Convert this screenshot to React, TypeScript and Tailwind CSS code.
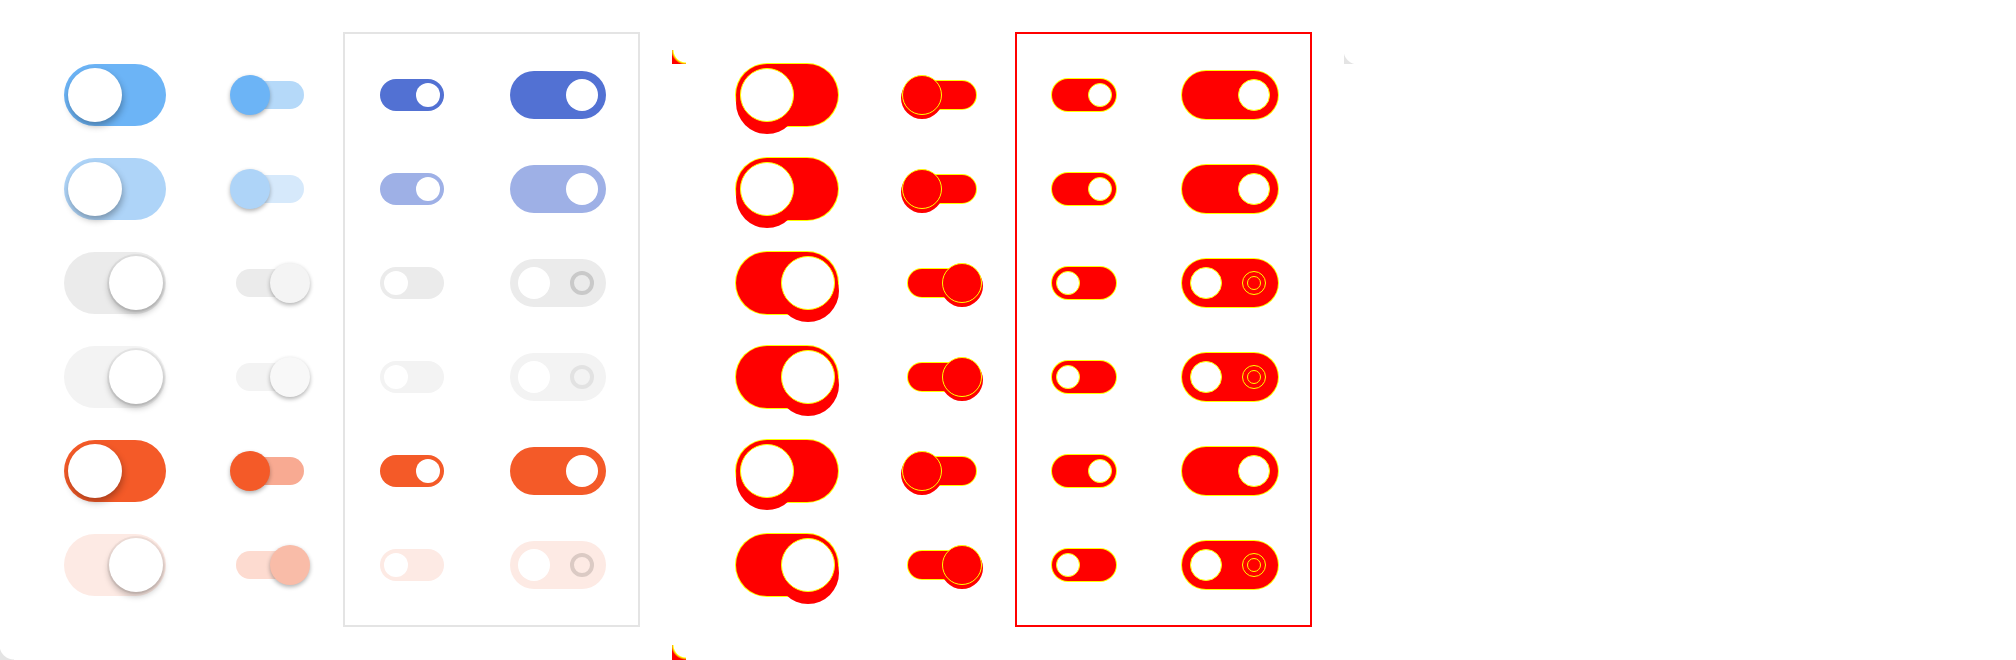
import React from 'react'

type Row = {
    on: boolean
    track: string
    smallTrack: string
    smallThumb: string
    pill: string
    ring: string
}

// one entry per row, same order in every column
const rows: Row[] = [
    { on: true, track: 'bg-[#6cb4f6]', smallTrack: 'bg-[#b5d9f9]', smallThumb: 'bg-[#6cb4f6]', pill: 'bg-[#5271d3]', ring: '' },
    { on: true, track: 'bg-[#aed4f8]', smallTrack: 'bg-[#d6e9fb]', smallThumb: 'bg-[#aed4f8]', pill: 'bg-[#9eb0e6]', ring: '' },
    { on: false, track: 'bg-[#ebebeb]', smallTrack: 'bg-[#ebebeb]', smallThumb: 'bg-[#f4f4f4]', pill: 'bg-[#ebebeb]', ring: 'border-[#c9c9c9]' },
    { on: false, track: 'bg-[#f3f3f3]', smallTrack: 'bg-[#f3f3f3]', smallThumb: 'bg-[#f8f8f8]', pill: 'bg-[#f3f3f3]', ring: 'border-[#e2e2e2]' },
    { on: true, track: 'bg-[#f45a28]', smallTrack: 'bg-[#f8aa92]', smallThumb: 'bg-[#f45a28]', pill: 'bg-[#f45a28]', ring: '' },
    { on: false, track: 'bg-[#fdeae4]', smallTrack: 'bg-[#fddbd0]', smallThumb: 'bg-[#f9bca8]', pill: 'bg-[#fdeae4]', ring: 'border-[#dbcac4]' },
]

const RED = 'bg-[#ff0000] shadow-[0_0_0_1px_#ffff00]'

function InsetSwitch({ row, diff }: { row: Row; diff: boolean }) {
    return (
        <div className={`flex w-[102px] h-[62px] items-center rounded-full p-[4px] ${row.on ? 'justify-start' : 'justify-end pr-[3px]'} ${diff ? RED : row.track}`}>
            <div
                className={`size-[54px] shrink-0 rounded-full bg-white ${
                    diff
                        ? 'border border-[#ffff00] shadow-[0_8px_0_4px_#ff0000]'
                        : row.on
                          ? 'shadow-[1px_4px_7px_rgba(0,0,0,0.3)]'
                          : 'shadow-[0_0_0_2px_rgba(0,0,0,0.05),0_4px_6px_rgba(0,0,0,0.25)]'
                }`}
            />
        </div>
    )
}

function MaterialSwitch({ row, diff }: { row: Row; diff: boolean }) {
    return (
        <div className={`relative w-[68px] h-[28px] rounded-full ${diff ? RED : row.smallTrack}`}>
            {/* knob hangs over the track ends */}
            <div
                className={`absolute top-[-6px] size-[40px] rounded-full ${row.on ? 'left-[-6px]' : 'right-[-6px]'} ${
                    diff
                        ? 'bg-[#ff0000] border border-[#ffff00] shadow-[0_3px_0_1px_#ff0000]'
                        : `${row.smallThumb} shadow-[0_2px_4px_rgba(0,0,0,0.3)]`
                }`}
            />
        </div>
    )
}

function PillSwitch({ row, diff }: { row: Row; diff: boolean }) {
    return (
        <div className={`flex w-[64px] h-[32px] items-center rounded-full p-[4px] ${row.on ? 'justify-end' : 'justify-start'} ${diff ? RED : row.pill}`}>
            <div className={`size-[24px] rounded-full bg-white ${diff ? 'border border-[#ffff00]' : ''}`} />
        </div>
    )
}

function LabelSwitch({ row, diff }: { row: Row; diff: boolean }) {
    return (
        <div className={`flex w-[96px] h-[48px] items-center justify-between rounded-full p-[8px] ${diff ? RED : row.pill}`}>
            {row.on ? (
                <>
                    <span />
                    <div className={`size-[32px] rounded-full bg-white ${diff ? 'border border-[#ffff00]' : ''}`} />
                </>
            ) : (
                <>
                    <div className={`size-[32px] rounded-full bg-white ${diff ? 'border border-[#ffff00]' : ''}`} />
                    {diff ? (
                        <div className="mr-[4px] flex size-[24px] items-center justify-center rounded-full border border-[#ffff00]">
                            <div className="size-[14px] rounded-full border border-[#ffff00]" />
                        </div>
                    ) : (
                        <div className={`mr-[4px] size-[24px] rounded-full border-[4px] ${row.ring}`} />
                    )}
                </>
            )}
        </div>
    )
}

function Panel({ diff }: { diff: boolean }) {
    return (
        <div className="flex items-start pt-[32px]">
            <div className="ml-[64px] mt-[16px] flex flex-col">
                {rows.map((r, i) => (
                    <div key={i} className="flex h-[94px] items-center">
                        <InsetSwitch row={r} diff={diff} />
                    </div>
                ))}
            </div>

            <div className="ml-[64px] mt-[16px] flex w-[80px] flex-col">
                {rows.map((r, i) => (
                    <div key={i} className="flex h-[94px] items-center justify-center">
                        <MaterialSwitch row={r} diff={diff} />
                    </div>
                ))}
            </div>

            {/* bordered group */}
            <div className={`ml-[33px] flex w-[297px] h-[595px] border-2 pt-[14px] ${diff ? 'border-[#ff0000]' : 'border-[#e4e4e4]'}`}>
                <div className="ml-[35px] flex w-[64px] flex-col">
                    {rows.map((r, i) => (
                        <div key={i} className="flex h-[94px] items-center">
                            <PillSwitch row={r} diff={diff} />
                        </div>
                    ))}
                </div>
                <div className="ml-[66px] flex w-[96px] flex-col">
                    {rows.map((r, i) => (
                        <div key={i} className="flex h-[94px] items-center">
                            <LabelSwitch row={r} diff={diff} />
                        </div>
                    ))}
                </div>
            </div>
        </div>
    )
}

export default function App() {
    return (
        <div className="flex w-[2016px] h-[660px] overflow-hidden bg-white">
            {/* expected */}
            <div className="relative w-[672px] h-[660px] shrink-0">
                <Panel diff={false} />
                <div className="absolute bottom-0 left-0 w-[14px] h-[15px] bg-[radial-gradient(circle_at_100%_0%,#ffffff_14px,#e4e4e4_15px)]" />
            </div>

            {/* diff */}
            <div className="relative w-[672px] h-[660px] shrink-0">
                <Panel diff={true} />
                <div className="absolute top-[50px] left-0 w-[14px] h-[14px] bg-[radial-gradient(circle_at_100%_0%,#ffffff_12px,#ffff00_13px,#ff0000_15px)]" />
                <div className="absolute bottom-0 left-0 w-[14px] h-[15px] bg-[radial-gradient(circle_at_100%_0%,#ffffff_12px,#ffff00_13px,#ff0000_15px)]" />
            </div>

            {/* actual */}
            <div className="relative w-[672px] h-[660px] shrink-0">
                <div className="absolute top-[50px] left-0 w-[14px] h-[14px] bg-[radial-gradient(circle_at_100%_0%,#ffffff_14px,#e4e4e4_15px)]" />
            </div>
        </div>
    )
}
